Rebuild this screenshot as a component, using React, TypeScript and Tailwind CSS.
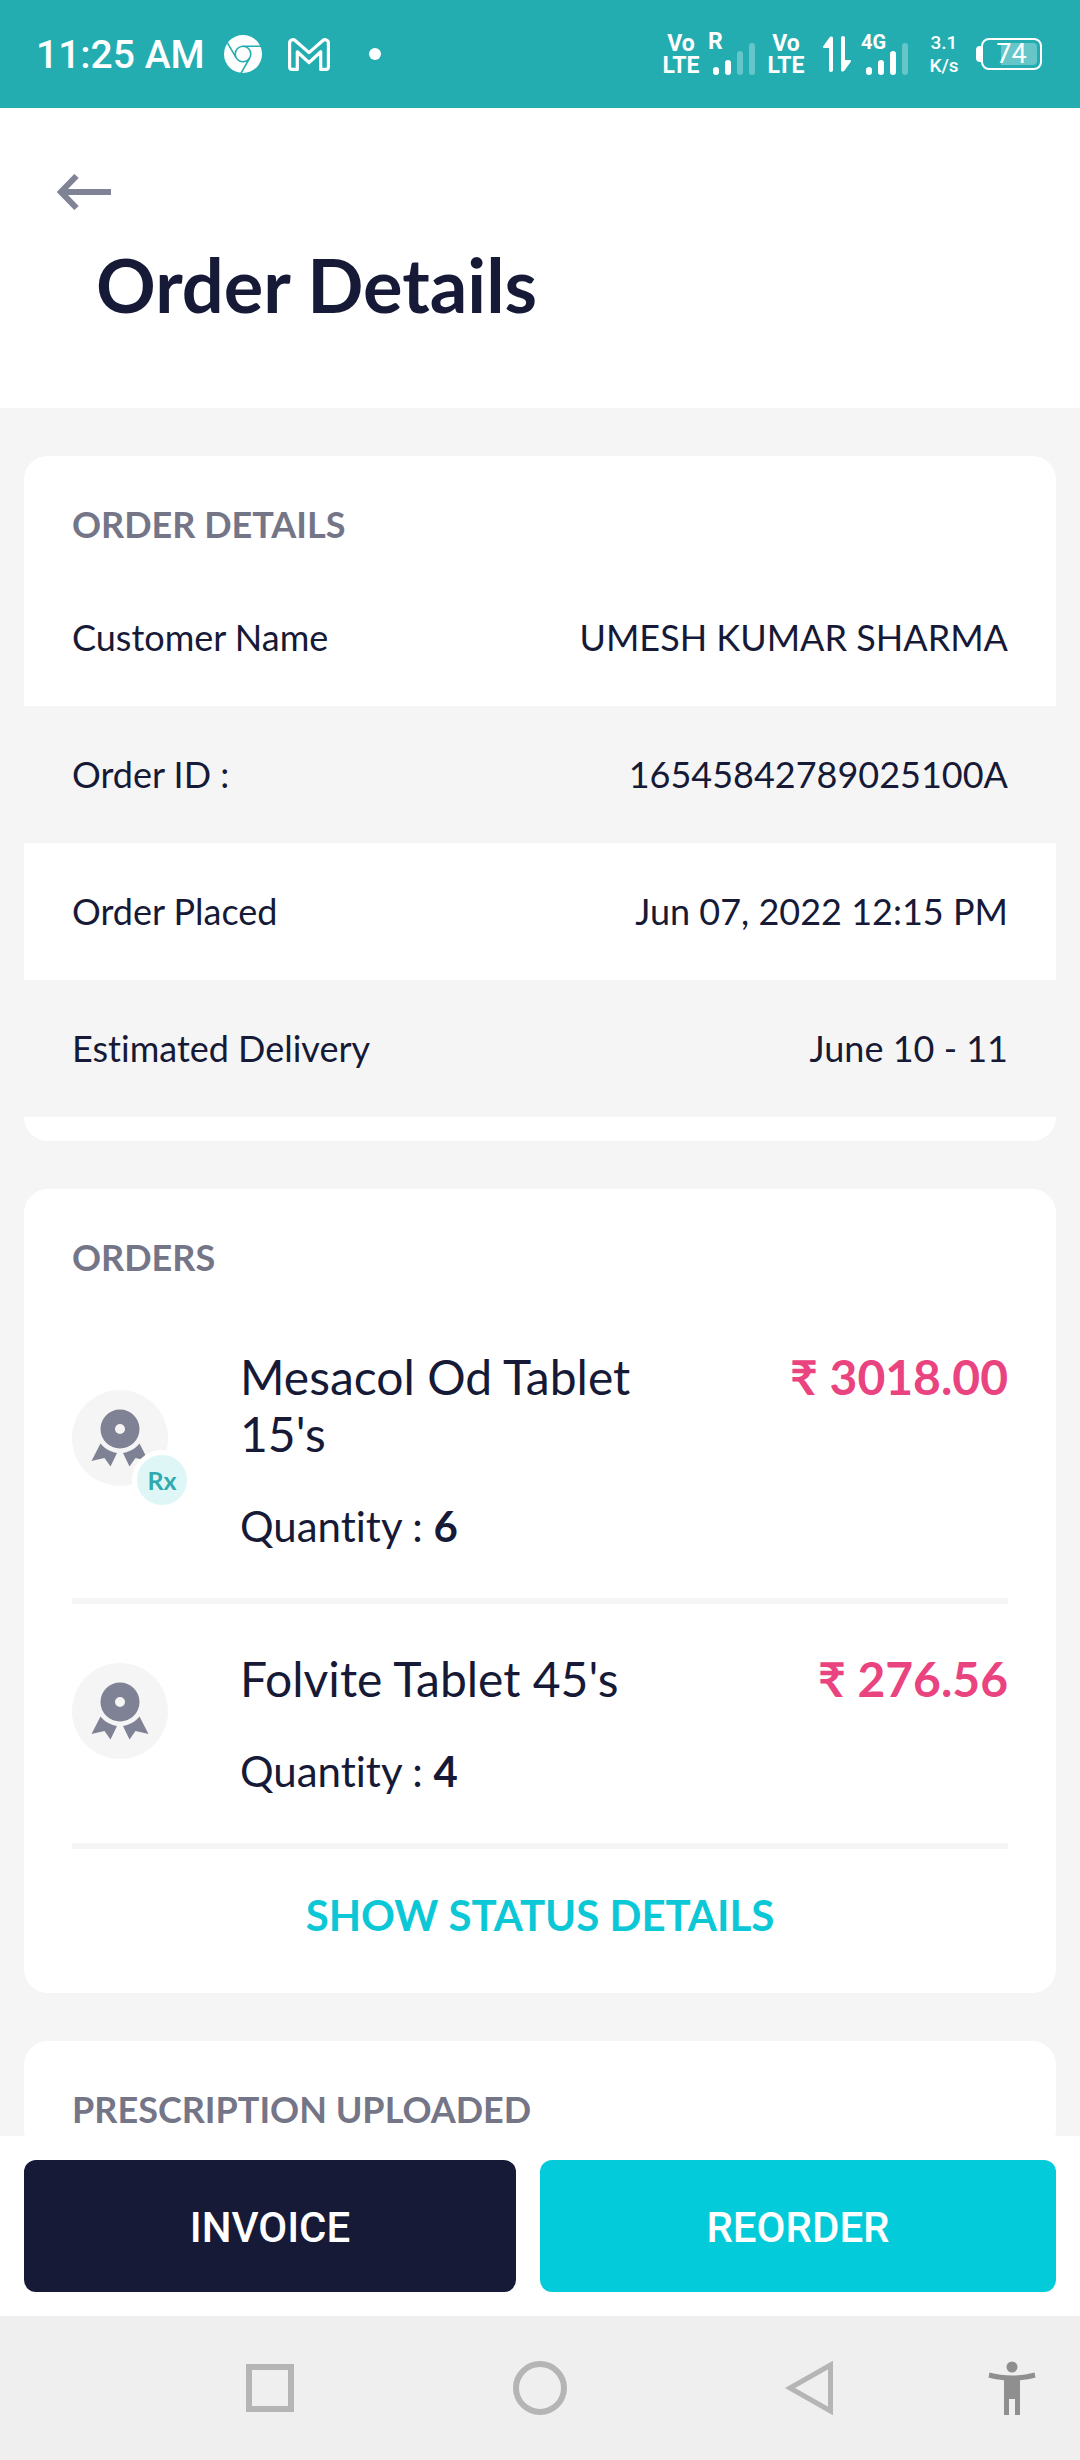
import type { ReactNode } from "react";

const details = [
  { label: "Customer Name", value: "UMESH KUMAR SHARMA" },
  { label: "Order ID :", value: "16545842789025100A" },
  { label: "Order Placed", value: "Jun 07, 2022 12:15 PM" },
  { label: "Estimated Delivery", value: "June 10 - 11" },
];

const orders = [
  { name: "Mesacol Od Tablet 15's", price: "3018.00", quantity: 6, rx: true },
  { name: "Folvite Tablet 45's", price: "276.56", quantity: 4, rx: false },
];

function ChromeIcon() {
  return (
    <svg className="size-[38px]" viewBox="0 0 38 38" aria-hidden="true">
      <circle cx="19" cy="19" r="19" fill="white" />
      <g fill="none" stroke="#24adb1" strokeWidth="1.6">
        <circle cx="19" cy="19" r="7.8" />
        <path d="M19 11.2H37M12.2 22.9 3.6 8.2M25.8 22.9 16.8 38.5" />
      </g>
    </svg>
  );
}

function GmailIcon() {
  return (
    <svg className="h-[33px] w-[42px]" viewBox="0 0 42 33" aria-hidden="true">
      <path
        d="M4 31.400H9.300V13.800L21 24.600 32.700 13.800V31.400H38A2.500 2.500 0 0 0 40.400 29V5C40.400 1.700 36.800 .8 34.600 2.700L21 14.600 7.400 2.700C5.200 .8 1.600 1.700 1.600 5V29A2.500 2.500 0 0 0 4 31.400Z"
        fill="none"
        stroke="white"
        strokeWidth="3.200"
        strokeLinejoin="round"
      />
    </svg>
  );
}

function VoLte() {
  return (
    <p className="w-[38px] pt-0.5 text-center text-[23px] leading-[22px] font-bold">
      Vo
      <br />
      LTE
    </p>
  );
}

function Signal({ label, level }: { label: ReactNode; level: number }) {
  const bars = ["h-[8px]", "h-[15px]", "h-[24px]", "h-[32px]"];
  return (
    <div className="relative flex h-[41px] w-[46px] items-end gap-[6px] pl-[4px]">
      <span className="absolute -top-px -left-px leading-[18px] font-bold">{label}</span>
      {bars.map((height, i) => (
        <span
          key={height}
          className={`${height} w-[6px] rounded-full ${i < level ? "bg-white" : "bg-white/30"}`}
        />
      ))}
    </div>
  );
}

function StatusBar() {
  return (
    <div className="flex h-[108px] shrink-0 items-center justify-between bg-[#24adb1] pr-[38px] pl-[36px] font-['Roboto',sans-serif] text-white">
      <div className="flex items-center">
        <span className="mr-[19px] pt-0.5 text-[39px] leading-[46px] font-medium">11:25 AM</span>
        <ChromeIcon />
        <span className="ml-[26px]">
          <GmailIcon />
        </span>
        <span className="ml-[39px] size-[12px] rounded-full bg-white" />
      </div>
      <div className="flex items-center">
        <VoLte />
        <div className="ml-[9px]">
          <Signal label={<span className="text-[23px]">R</span>} level={2} />
        </div>
        <div className="ml-[12px]">
          <VoLte />
        </div>
        <svg className="ml-[18px] h-[36px] w-[28px]" viewBox="0 0 28 36" fill="white" aria-hidden="true">
          <path d="M6.500 1.500C7.500-.2 10 .2 10 2V34a2 2 0 0 1-4 0V12H1.500C0 12-.3 11 .4 10Z" />
          <path d="M21.500 34.500C20.500 36.200 18 35.800 18 34V2a2 2 0 0 1 4 0V24H26.500C28 24 28.300 25 27.600 26Z" />
        </svg>
        <div className="ml-[11px]">
          <Signal label={<span className="text-[20px]">4G</span>} level={3} />
        </div>
        <div className="ml-[20px] flex w-[32px] flex-col items-center text-[19px] leading-[23px] font-medium">
          <span>3.1</span>
          <span>K/s</span>
        </div>
        <div className="ml-[16px] flex items-center">
          <span className="h-[16px] w-[5px] rounded-l-sm bg-white" />
          <div className="flex h-[32px] w-[61px] items-center rounded-lg border-2 border-white p-[3px]">
            <span className="flex h-full w-full items-center justify-center rounded-sm bg-linear-to-r from-transparent from-30% to-white/30 to-30% text-[27px] leading-[26px]">
              74
            </span>
          </div>
        </div>
      </div>
    </div>
  );
}

function MedalIcon() {
  return (
    <svg className="size-[60px]" viewBox="0 0 60 60" fill="#7f8294" aria-hidden="true">
      <path
        fillRule="evenodd"
        d="M30 1.500a19.500 19.500 0 1 0 0 39 19.500 19.500 0 1 0 0-39ZM30 16a5 5 0 1 1 0 10 5 5 0 1 1 0-10Z"
      />
      <path d="M10.500 35.500C14.500 40.500 20.500 44 27 45L20.500 58.500 14.500 50 1.500 53Z" />
      <path d="M49.500 35.500C45.500 40.500 39.500 44 33 45L39.500 58.500 45.500 50 58.500 53Z" />
    </svg>
  );
}

function Card({ title, children }: { title: string; children?: ReactNode }) {
  return (
    <section className="rounded-3xl bg-white">
      <h2 className="px-12 pt-[47px] pb-[23px] text-[36px] leading-[43px] font-bold text-[#747688]">{title}</h2>
      {children}
    </section>
  );
}

export default function App() {
  return (
    <div className="flex h-screen flex-col bg-[#f5f5f5] font-['Lato',sans-serif] text-[#161a37] [font-variant-ligatures:none]">
      <StatusBar />
      <header className="shrink-0 bg-white pt-[66px] pb-[79px]">
        <button type="button" aria-label="Back" className="ml-[57px] block">
          <svg className="h-[36px] w-[54px]" viewBox="0 0 54 36" fill="none" stroke="#808396" strokeWidth="6" aria-hidden="true">
            <path d="M5 18H54M19.500 2 4 18 19.500 34" />
          </svg>
        </button>
        <h1 className="mt-[31px] ml-24 text-[74px] leading-[88px] font-bold">Order Details</h1>
      </header>

      <main className="flex min-h-0 flex-1 flex-col gap-12 overflow-hidden px-6 pt-12">
        <Card title="ORDER DETAILS">
          <dl className="pb-6 text-[36px] leading-[43px]">
            {details.map((row) => (
              <div key={row.label} className="flex justify-between px-12 py-[47px] even:bg-[#f5f5f5]">
                <dt>{row.label}</dt>
                <dd>{row.value}</dd>
              </div>
            ))}
          </dl>
        </Card>

        <Card title="ORDERS">
          <ul className="px-12">
            {orders.map((order) => (
              <li key={order.name} className="flex border-b-6 border-[#f5f5f5] pt-[46px] pb-[47px]">
                <div className="relative mr-[72px] self-center pb-6">
                  <div className="flex size-24 items-center justify-center rounded-full bg-[#f5f5f5]">
                    <MedalIcon />
                  </div>
                  {order.rx && (
                    <span className="absolute top-[60px] left-[60px] flex size-[60px] items-center justify-center rounded-full border-5 border-white bg-[#dff6f6] text-[25px] leading-[28px] font-bold text-[#2fabaf]">
                      Rx
                    </span>
                  )}
                </div>
                <div className="flex-1">
                  <h3 className="max-w-[420px] text-[48px] leading-[57px]">{order.name}</h3>
                  <p className="mt-[39px] text-[42px] leading-[50px]">
                    Quantity : <b className="font-bold">{order.quantity}</b>
                  </p>
                </div>
                <p className="text-[48px] leading-[57px] font-bold text-[#ea4480]">₹ {order.price}</p>
              </li>
            ))}
          </ul>
          <button type="button" className="block w-full pt-[41px] pb-[53px] text-[42px] leading-[50px] font-bold text-[#0cc8d6]">
            SHOW STATUS DETAILS
          </button>
        </Card>

        <Card title="PRESCRIPTION UPLOADED" />
      </main>

      <footer className="grid shrink-0 grid-cols-2 bg-white py-6 font-['Roboto',sans-serif] text-[42px] leading-[50px] font-medium text-white">
        <button type="button" className="mx-6 rounded-xl bg-[#161a37] pt-[43px] pb-[39px]">
          INVOICE
        </button>
        <button type="button" className="mr-6 rounded-xl bg-[#04cbd9] pt-[43px] pb-[39px]">
          REORDER
        </button>
      </footer>

      <nav className="relative flex h-36 shrink-0 items-center justify-around bg-[#efefef] px-[12.5%] text-[#b5b5b5]">
        <button type="button" aria-label="Recent apps">
          <svg className="size-[54px]" viewBox="0 0 54 54" fill="none" stroke="currentColor" strokeWidth="6" aria-hidden="true">
            <path d="M6 6H48V48H6Z" />
          </svg>
        </button>
        <button type="button" aria-label="Home">
          <svg className="size-[54px]" viewBox="0 0 54 54" fill="none" stroke="currentColor" strokeWidth="6" aria-hidden="true">
            <circle cx="27" cy="27" r="24" />
          </svg>
        </button>
        <button type="button" aria-label="Back">
          <svg className="size-[54px]" viewBox="0 0 54 54" fill="none" stroke="currentColor" strokeWidth="5" aria-hidden="true">
            <path d="M47.500 4V50L7 27Z" />
          </svg>
        </button>
        <button type="button" aria-label="Accessibility" className="absolute right-[44px]">
          <svg className="h-[54px] w-[48px]" viewBox="0 0 48 54" fill="#8f8f8f" aria-hidden="true">
            <circle cx="24" cy="6" r="5.500" />
            <path d="M1.500 11.500C16 15.500 32 15.500 46.500 11.500L47.500 16.500C43 17.800 37 18.800 32 19.300V54H27V38H21V54H16V19.300C11 18.800 5 17.800.5 16.500Z" />
          </svg>
        </button>
      </nav>
    </div>
  );
}
